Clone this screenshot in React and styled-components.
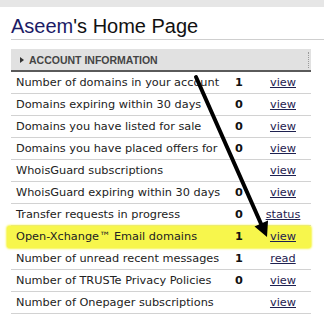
import React from "react";
import styled, { createGlobalStyle } from "styled-components";

const GlobalStyle = createGlobalStyle`
    body {
        margin: 0;
        background: #ffffff;
        font-family: "DejaVu Sans", Verdana, sans-serif;
    }
`;

const Screen = styled.div`
    position: relative;
    width: 324px;
    height: 323px;
    overflow: hidden;
    background: #ffffff;
`;

const TopStrip = styled.div`
    height: 7px;
    background: #e6e6e6;
`;

const Page = styled.div`
    padding-left: 11px;
`;

const Title = styled.h1`
    margin: 8px 0 0;
    padding-bottom: 1px;
    border-bottom: 1px solid #cfcfcf;
    font-family: "Liberation Sans", Arial, sans-serif;
    font-size: 20px;
    font-weight: normal;
    line-height: 23px;
    color: #111111;
`;

const Owner = styled.span`
    color: #1b1b66;
`;

const Table = styled.div`
    width: 300px;
    margin-top: 9px;
`;

const Header = styled.div`
    position: relative;
    display: flex;
    align-items: center;
    gap: 5px;
    height: 21px;
    padding-left: 9px;
    background: #e1e1e1;
    border-bottom: 2px solid #5a5a5a;
    font-family: "Liberation Sans", Arial, sans-serif;
    font-size: 10.5px;
    font-weight: bold;
    color: #444444;
    text-transform: uppercase;

    &::after {
        content: "";
        position: absolute;
        right: 2px;
        top: 3px;
        bottom: 2px;
        border-right: 1px dotted #9a9a9a;
    }
`;

const Caret = styled.span`
    width: 0;
    height: 0;
    border-top: 3px solid transparent;
    border-bottom: 3px solid transparent;
    border-left: 4px solid #333333;
`;

const Row = styled.div`
    display: grid;
    grid-template-columns: 219px 25px 56px;
    align-items: center;
    height: 21px;
    border-bottom: 1px solid ${(p) => (p.$highlight ? "#f7f64c" : "#d2d2d2")};
    background: ${(p) => (p.$highlight ? "#f7f64c" : "transparent")};
    box-shadow: ${(p) => (p.$highlight ? "0 0 2px 1px #f7f64c" : "none")};
    border-radius: ${(p) => (p.$highlight ? "3px" : "0")};
    margin-left: ${(p) => (p.$highlight ? "-4px" : "0")};
    padding-left: ${(p) => (p.$highlight ? "4px" : "0")};
    font-size: 11.3px;
    color: #222222;
`;

const Label = styled.span`
    padding-left: 5px;
    white-space: nowrap;
`;

const Count = styled.span`
    padding-left: 5px;
    font-weight: bold;
    color: #111111;
`;

const Action = styled.a`
    text-align: center;
    color: #1e2150;
    text-decoration: underline;
    cursor: pointer;
`;

const Arrow = styled.svg`
    position: absolute;
    left: 0;
    top: 0;
    pointer-events: none;
`;

const rows = [
    { label: "Number of domains in your account", count: "1", action: "view" },
    { label: "Domains expiring within 30 days", count: "0", action: "view" },
    { label: "Domains you have listed for sale", count: "0", action: "view" },
    { label: "Domains you have placed offers for", count: "0", action: "view" },
    { label: "WhoisGuard subscriptions", count: "", action: "view" },
    { label: "WhoisGuard expiring within 30 days", count: "0", action: "view" },
    { label: "Transfer requests in progress", count: "0", action: "status" },
    { label: "Open-Xchange\u2122 Email domains", count: "1", action: "view", highlight: true },
    { label: "Number of unread recent messages", count: "1", action: "read" },
    { label: "Number of TRUSTe Privacy Policies", count: "0", action: "view" },
    { label: "Number of Onepager subscriptions", count: "", action: "view" },
];

const App = () => {
    return (
        <Screen>
            <GlobalStyle />
            <TopStrip />
            <Page>
                <Title>
                    <Owner>Aseem</Owner>'s Home Page
                </Title>
                <Table>
                    <Header>
                        <Caret />
                        Account Information
                    </Header>
                    {rows.map((r) => (
                        <Row key={r.label} $highlight={r.highlight}>
                            <Label>{r.label}</Label>
                            <Count>{r.count}</Count>
                            <Action>{r.action}</Action>
                        </Row>
                    ))}
                </Table>
            </Page>
            <Arrow width="324" height="323" viewBox="0 0 324 323">
                <line x1="196" y1="77" x2="262" y2="226" stroke="#000" strokeWidth="4" strokeLinecap="round" />
                <polygon points="267,237 254.5,226.5 268,220.5" fill="#000" />
            </Arrow>
        </Screen>
    );
};

export default App;
